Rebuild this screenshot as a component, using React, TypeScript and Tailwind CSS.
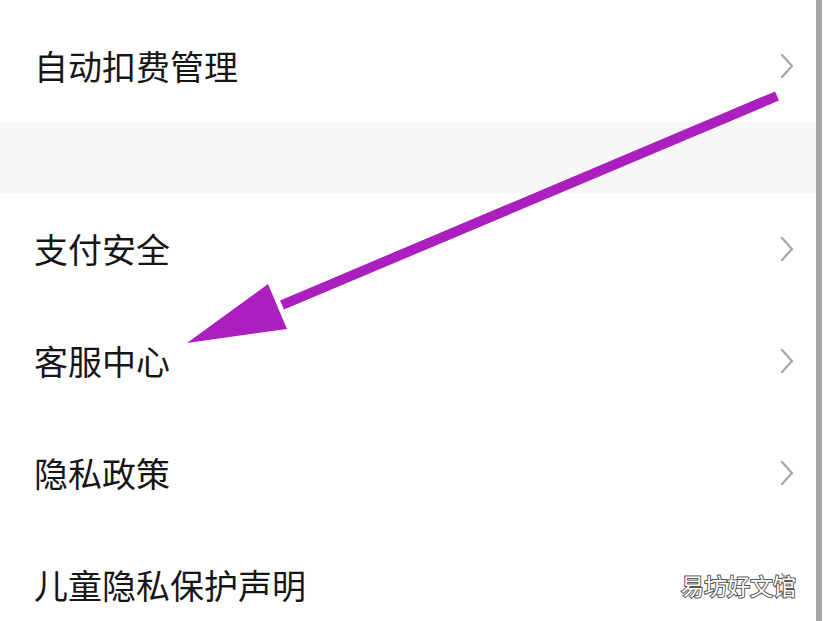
const rows = ['支付安全', '客服中心', '隐私政策', '儿童隐私保护声明'];

function Chevron() {
  return (
    <svg width="14" height="26" viewBox="0 0 14 26" fill="none" className="shrink-0">
      <path d="M2 2 L12 13 L2 24" stroke="#a9a9a9" strokeWidth="2.4" strokeLinecap="round" strokeLinejoin="round" />
    </svg>
  );
}

function Row({ label }: { label: string }) {
  return (
    <div className="flex items-center justify-between h-[112px] shrink-0 pl-[34px] pr-[22px]">
      <span className="text-[34px] text-[#161616] leading-none">{label}</span>
      <Chevron />
    </div>
  );
}

export default function App() {
  return (
    <div
      className="relative w-[828px] h-[621px] overflow-hidden bg-white flex"
      style={{ fontFamily: '"Noto Sans CJK SC", "Noto Sans", sans-serif' }}
    >
      <div className="w-[816px] shrink-0 flex flex-col">
        <div className="pt-[10px] shrink-0">
          <Row label="自动扣费管理" />
        </div>
        <div className="h-[71px] bg-[#f7f7f7] shrink-0" />
        {rows.map((r) => (
          <Row key={r} label={r} />
        ))}
      </div>
      <div className="w-[6px] bg-[#a8a8a8] shrink-0" />
      <div className="flex-1 bg-white" />

      {/* annotation arrow */}
      <svg className="absolute inset-0 pointer-events-none" width="828" height="621" viewBox="0 0 828 621">
        <line x1="777" y1="96" x2="282" y2="305" stroke="#ab1fbe" strokeWidth="10" />
        <polygon points="187,343 268,284 287,329" fill="#ab1fbe" />
      </svg>

      {/* watermark */}
      <div
        className="absolute left-[681px] top-[574px] text-[23px] leading-none text-white [-webkit-text-stroke:2px_#555] [paint-order:stroke_fill]"
      >
        易坊好文馆
      </div>
    </div>
  );
}
